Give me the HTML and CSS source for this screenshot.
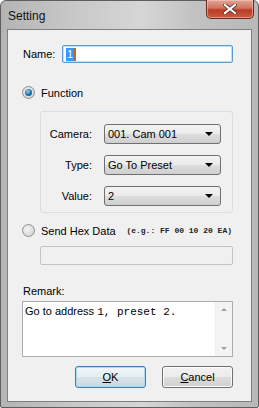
FILE: index.html
```html
<!DOCTYPE html>
<html lang="en">
<head>
  <meta charset="UTF-8" />
  <title>Setting</title>
  <link rel="stylesheet" href="styles.css">
</head>
<body>
  <div class="window">
    <div class="titlebar">
      <span class="title">Setting</span>
      <button class="close-btn">
        <svg width="14" height="10" viewBox="0 0 14 10">
          <path d="M2 1 L12 9 M12 1 L2 9" stroke="#4a2a25" stroke-width="3.6" stroke-linecap="square"/>
          <path d="M2 1 L12 9 M12 1 L2 9" stroke="#fff" stroke-width="2.2" stroke-linecap="square"/>
        </svg>
      </button>
    </div>

    <div class="client">
      <div class="name-row">
        <label class="name-label">Name:</label>
        <div class="textbox focused"><span class="sel">1</span><span class="caret"></span></div>
      </div>

      <div class="radio-row first">
        <span class="radio checked"></span>
        <span>Function</span>
      </div>

      <div class="groupbox">
        <div class="field">
          <label>Camera:</label>
          <div class="combo"><span>001. Cam 001</span><span class="arrow"></span></div>
        </div>
        <div class="field">
          <label>Type:</label>
          <div class="combo"><span>Go To Preset</span><span class="arrow"></span></div>
        </div>
        <div class="field">
          <label>Value:</label>
          <div class="combo"><span>2</span><span class="arrow"></span></div>
        </div>
      </div>

      <div class="radio-row hex">
        <span class="radio"></span>
        <span>Send Hex Data</span>
        <span class="hint">(e.g.: FF 00 10 20 EA)</span>
      </div>

      <div class="textbox disabled hexbox"></div>

      <div class="remark-label">Remark:</div>
      <div class="memo">
        <div class="memo-text">Go to address <span class="mono">1, preset 2.</span></div>
        <div class="scrollbar">
          <span class="up"></span>
          <span class="down"></span>
        </div>
      </div>

      <div class="buttons">
        <button class="btn default"><u>O</u>K</button>
        <button class="btn"><u>C</u>ancel</button>
      </div>
    </div>
  </div>
</body>
</html>
```

FILE: styles.css
```css
* {
  box-sizing: border-box;
}
body {
  margin: 0;
  font-family: 'Liberation Sans', Arial, sans-serif;
  font-size: 11px;
  color: #000;
  background: #fff;
}
.window {
  width: 259px;
  height: 408px;
  border: 1px solid #5e5e5e;
  border-radius: 6px 6px 2px 2px;
  background: linear-gradient(90deg, #b4b4b4 0%, #c9c9c9 30%, #d6d6d6 55%, #c2c2c2 75%, #b8b8b8 100%);
  display: flex;
  flex-direction: column;
}
.titlebar {
  height: 28px;
  display: flex;
  justify-content: space-between;
  align-items: flex-start;
  padding-left: 7px;
}
.title {
  font-size: 12px;
  margin-top: 8px;
  color: #111;
}
.close-btn {
  width: 48px;
  height: 19px;
  margin: -1px 4px 0 0;
  border: 1px solid #6b2a20;
  border-top: none;
  border-radius: 0 0 5px 5px;
  background: linear-gradient(180deg, #e3a595 0%, #d0735f 45%, #bb3c24 55%, #c95a3f 100%);
  box-shadow: inset 0 0 0 1px rgba(255, 210, 200, 0.5);
  display: flex;
  align-items: center;
  justify-content: center;
  padding: 0;
}
.client {
  height: 373px;
  margin: 0 6px;
  border: 1px solid #7f7f7f;
  background: #f0f0f0;
  padding: 15px 18px 0 14px;
  display: flex;
  flex-direction: column;
}
.name-row {
  display: flex;
  align-items: center;
  height: 18px;
  padding-left: 1px;
}
.name-label {
  width: 39px;
}
.textbox {
  flex: 1;
  height: 18px;
  border: 1px solid #abadb3;
  border-radius: 2px;
  background: #fff;
  display: flex;
  align-items: center;
  padding-left: 3px;
}
.textbox.focused {
  border-color: #5d9bd1;
  box-shadow: inset 0 0 0 1px #c5def4;
}
.sel {
  background: #3399ff;
  color: #fff;
  line-height: 13px;
  padding: 0 1px;
}
.caret {
  width: 2px;
  height: 13px;
  background: #c7660e;
}
.radio-row {
  display: flex;
  align-items: center;
  gap: 6px;
  height: 13px;
}
.radio-row.first {
  margin-top: 23px;
}
.radio {
  width: 13px;
  height: 13px;
  border-radius: 50%;
  border: 1px solid #8e8f8f;
  background: radial-gradient(circle at 40% 40%, #f4f4f4 0%, #d8d8d8 70%, #c9c9c9 100%);
  display: flex;
  align-items: center;
  justify-content: center;
}
.radio.checked::after {
  content: "";
  width: 7px;
  height: 7px;
  border-radius: 50%;
  background: radial-gradient(circle at 40% 35%, #9ed6f5 0%, #2a7fb8 45%, #0b3d66 100%);
}
.groupbox {
  margin: 12px 0 0 18px;
  height: 102px;
  border: 1px solid #d5dfe5;
  border-radius: 3px;
  padding: 12px 11px 0 0;
  display: flex;
  flex-direction: column;
  gap: 11px;
}
.field {
  display: flex;
  align-items: center;
  height: 20px;
}
.field label {
  width: 51px;
  text-align: right;
  margin-right: 12px;
}
.combo {
  flex: 1;
  height: 20px;
  border: 1px solid #707070;
  border-radius: 3px;
  background: linear-gradient(180deg, #f3f3f3 0%, #ebebeb 48%, #dddddd 52%, #cfcfcf 100%);
  display: flex;
  align-items: center;
  justify-content: space-between;
  padding: 0 7px 0 3px;
}
.arrow {
  width: 0;
  height: 0;
  border-left: 4px solid transparent;
  border-right: 4px solid transparent;
  border-top: 4px solid #000;
}
.radio-row.hex {
  margin-top: 11px;
}
.hint {
  margin-left: auto;
  margin-right: 1px;
  font-family: 'Liberation Mono', monospace;
  font-size: 8px;
  font-weight: bold;
  color: #222;
}
.textbox.disabled {
  background: #f0f0f0;
  border-color: #c3c3c3;
}
.hexbox {
  flex: none;
  height: 19px;
  margin: 9px 0 0 18px;
}
.remark-label {
  margin-top: 20px;
  padding-left: 1px;
  line-height: 13px;
}
.memo {
  margin-top: 3px;
  height: 56px;
  border: 1px solid #abadb3;
  background: #fff;
  display: flex;
}
.memo-text {
  flex: 1;
  padding: 2px 2px;
  line-height: 14px;
}
.mono {
  font-family: 'Liberation Mono', monospace;
  font-size: 11px;
}
.scrollbar {
  width: 17px;
  background: #f3f3f3;
  border-left: 1px solid #f0f0f0;
  display: flex;
  flex-direction: column;
  justify-content: space-between;
  align-items: center;
  padding: 6px 0;
}
.up, .down {
  width: 0;
  height: 0;
  border-left: 3px solid transparent;
  border-right: 3px solid transparent;
}
.up {
  border-bottom: 3px solid #a0a0a0;
}
.down {
  border-top: 3px solid #a0a0a0;
}
.buttons {
  margin-top: 9px;
  display: flex;
  justify-content: flex-end;
  gap: 16px;
}
.btn {
  width: 71px;
  height: 22px;
  font-family: 'Liberation Sans', Arial, sans-serif;
  font-size: 11px;
  border: 1px solid #707070;
  border-radius: 3px;
  background: linear-gradient(180deg, #f2f2f2 0%, #ebebeb 48%, #dddddd 52%, #cfcfcf 100%);
  box-shadow: inset 0 0 0 1px #fcfcfc;
  padding: 0;
}
.btn.default {
  border-color: #3c7fb1;
  box-shadow: inset 0 0 0 1px #a8dcf3;
  background: linear-gradient(180deg, #f0f6f9 0%, #e6eef3 48%, #d8e2e9 52%, #cbd6de 100%);
}
```
